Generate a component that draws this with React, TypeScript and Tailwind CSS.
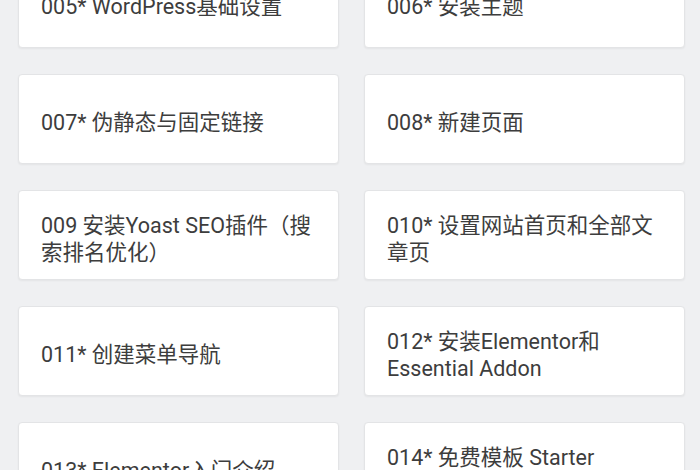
import React from "react";

const lessons = [
  "005* WordPress基础设置",
  "006* 安装主题",
  "007* 伪静态与固定链接",
  "008* 新建页面",
  "009 安装Yoast SEO插件（搜索排名优化）",
  "010* 设置网站首页和全部文章页",
  "011* 创建菜单导航",
  "012* 安装Elementor和 Essential Addon",
  "013* Elementor入门介绍",
  "014* 免费模板 Starter Templates",
];

const LessonCard = ({ title }: { title: string }) => {
  return (
    <div className="h-[90px] flex items-center pt-[7px] px-[22px] bg-white rounded-[4px] border border-[#e3e4e6] shadow-[0_1px_2px_rgba(0,0,0,0.05)]">
      <p className="text-[21.5px] leading-[27px] text-[#3d3d3d]">{title}</p>
    </div>
  );
};

const App = () => {
  return (
    <div
      className="h-[470px] overflow-hidden bg-[#eff0f2]"
      style={{ fontFamily: 'Roboto, "Noto Sans CJK SC", sans-serif' }}
    >
      <div className="grid grid-cols-2 gap-x-[25px] gap-y-[26px] pl-[18px] pr-[15px] mt-[-42px]">
        {lessons.map((title, index) => (
          <LessonCard key={index} title={title} />
        ))}
      </div>
    </div>
  );
};

export default App;
